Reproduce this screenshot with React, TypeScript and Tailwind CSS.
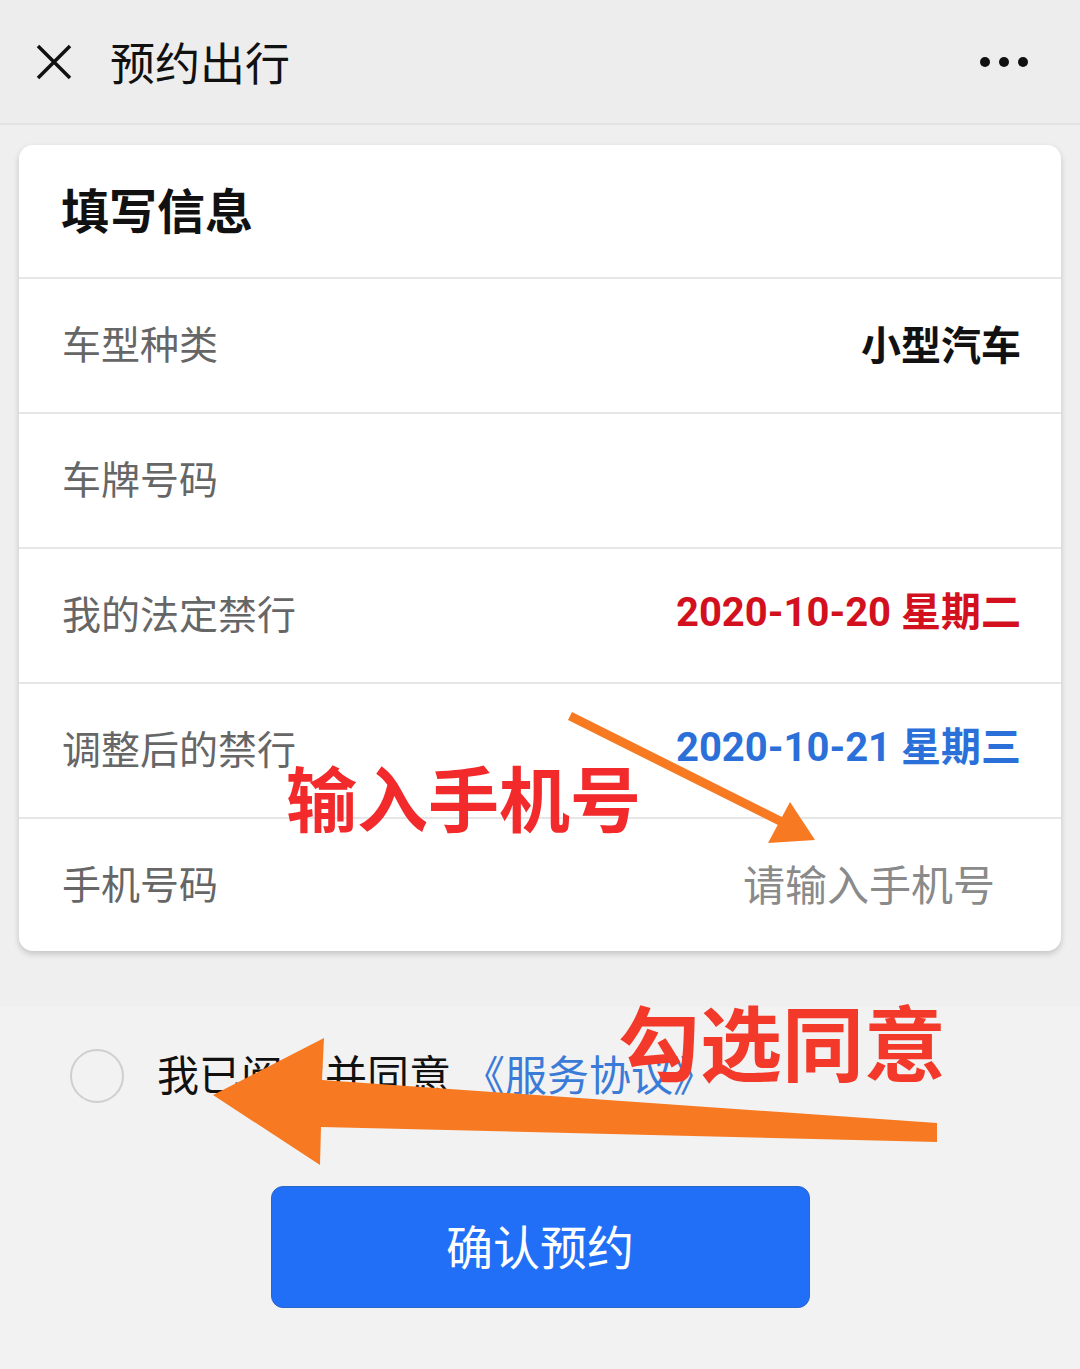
import React from "react";

const cjk = { fontFamily: '"Noto Sans CJK SC", "Noto Sans", sans-serif' };
const num = { fontFamily: 'Roboto, "Noto Sans CJK SC", sans-serif' };

function Row({ label, children, last }: { label: string; children?: React.ReactNode; last?: boolean }) {
  return (
    <div
      className={`flex items-center justify-between pl-[43px] pr-[40px] pb-[6px] ${
        last ? "h-[132px]" : "h-[135px] border-b-2 border-[#e6e6e6]"
      }`}
    >
      <span className="text-[39px] text-[#666]">{label}</span>
      {children}
    </div>
  );
}

export default function App() {
  return (
    <div className="relative min-h-[1369px] w-[1080px] bg-[#f2f2f2] overflow-hidden" style={cjk}>
      {/* top bar */}
      <div className="flex h-[125px] items-center justify-between border-b-2 border-[#e2e2e2] bg-[#ededed] pl-[36px] pr-[52px]">
        <div className="flex items-center gap-[38px]">
          <svg width="36" height="36" viewBox="0 0 36 36">
            <path d="M2 2 L34 34 M34 2 L2 34" stroke="#111" strokeWidth="3.5" />
          </svg>
          <span className="text-[45px] text-[#111] leading-none">预约出行</span>
        </div>
        <div className="flex gap-[9px]">
          <span className="h-[10px] w-[10px] rounded-full bg-[#111]" />
          <span className="h-[10px] w-[10px] rounded-full bg-[#111]" />
          <span className="h-[10px] w-[10px] rounded-full bg-[#111]" />
        </div>
      </div>

      <div className="bg-[#efefef] pt-[20px] pb-[56px]">
        <div className="mx-[19px] rounded-[14px] bg-white shadow-[0_3px_6px_rgba(0,0,0,0.18)]">
          <div className="flex h-[134px] items-center border-b-2 border-[#e6e6e6] pl-[42px] pb-[6px]">
            <span className="text-[48px] font-bold text-[#111]">填写信息</span>
          </div>
          <Row label="车型种类">
            <span className="text-[40px] font-bold text-[#111]">小型汽车</span>
          </Row>
          <Row label="车牌号码" />
          <Row label="我的法定禁行">
            <span className="text-[40px] font-bold text-[#d3101e]" style={num}>
              2020-10-20 星期二
            </span>
          </Row>
          <Row label="调整后的禁行">
            <span className="text-[40px] font-bold text-[#2a70d8]" style={num}>
              2020-10-21 星期三
            </span>
          </Row>
          <Row label="手机号码" last>
            <span className="mr-[26px] text-[42px] text-[#8a8a8a]">请输入手机号</span>
          </Row>
        </div>
      </div>

      {/* agreement */}
      <div className="flex items-center pl-[70px] pt-[34px]">
        <span className="h-[54px] w-[54px] rounded-full border-2 border-[#cfcfcf]" />
        <span className="ml-[33px] mb-[6px] text-[42px] text-[#111]">我已阅读并同意</span>
        <span className="ml-[12px] mb-[6px] text-[42px] text-[#3b7bd8]">《服务协议》</span>
      </div>

      <div className="flex justify-center pt-[76px]">
        <button className="flex h-[122px] w-[539px] items-center justify-center rounded-[12px] border border-[#2b66c9] bg-[#206ff6] pb-[4px] text-[47px] text-white">
          确认预约
        </button>
      </div>

      {/* annotations */}
      <span className="absolute left-[286px] top-[760px] text-[71px] font-bold leading-none text-[#f22a2c]">
        输入手机号
      </span>
      <span className="absolute left-[618px] top-[999px] text-[82px] font-bold leading-none text-[#f33a2a]">
        勾选同意
      </span>
      <svg className="absolute left-0 top-0" width="1080" height="1369" viewBox="0 0 1080 1369">
        <line x1="570" y1="716" x2="786" y2="824" stroke="#f77a22" strokeWidth="9" />
        <polygon points="790,802 768,843 815,840" fill="#f77a22" />
        <polygon
          points="213,1095 324,1038 322,1080 937,1123 937,1142 321,1127 320,1165"
          fill="#f77a22"
        />
      </svg>
    </div>
  );
}
